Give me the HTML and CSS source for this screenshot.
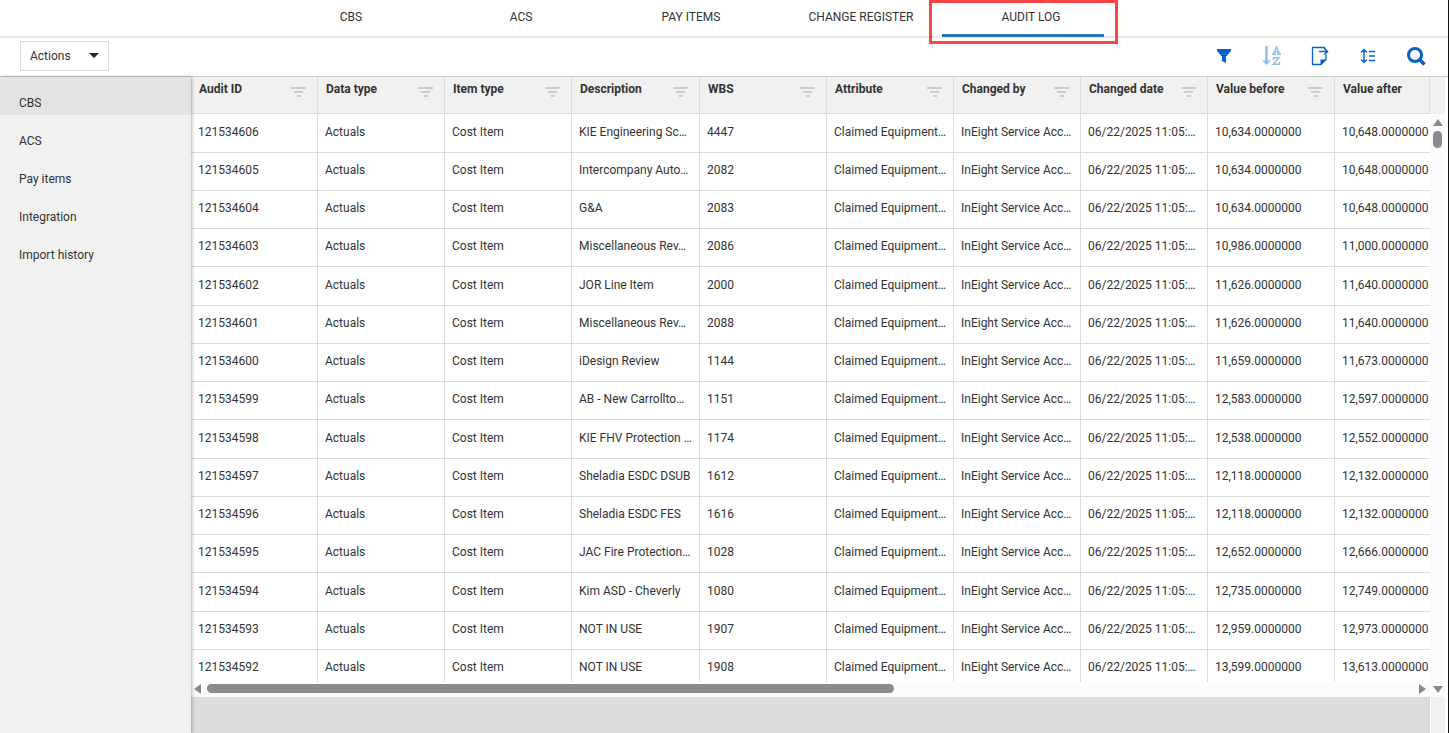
FILE: index.html
```html
<!DOCTYPE html>
<html lang="en">
<head>
    <meta charset="UTF-8">
    <meta name="viewport" content="width=device-width, initial-scale=1.0">
    <title>Audit log</title>
    <link rel="stylesheet" href="styles.css">
</head>
<body>
    <nav class="tabs">
        <a class="tab" href="#cbs">CBS</a>
        <a class="tab" href="#acs">ACS</a>
        <a class="tab" href="#pay-items">PAY ITEMS</a>
        <a class="tab" href="#change-register">CHANGE REGISTER</a>
        <a class="tab active" href="#audit-log">AUDIT LOG</a>
    </nav>

    <div class="toolbar">
        <button class="actions" type="button">Actions <span class="caret"></span></button>
        <div class="tools">
            <button type="button" aria-label="Filter">
                <svg width="20" height="20" viewBox="0 0 20 20"><path d="M3 3h14v2l-5 5.500V17l-4-2v-4.500L3 5z" fill="#0563cb"/></svg>
            </button>
            <button type="button" aria-label="Sort" disabled>
                <svg width="20" height="20" viewBox="0 0 20 20" fill="none" stroke="#8fbfec">
                    <path d="M4.500 0v16" stroke-width="2.500"/>
                    <path d="M0 14.500h9L4.500 19z" fill="#8fbfec" stroke="none"/>
                    <path d="M10 8.200h4M15 8.200h4M11.500 8l3-7 3 7M12.500 6h4" stroke-width="1.500"/>
                    <path d="M11.500 14v-2.200H17l-5.500 6.400h6V16" stroke-width="1.500"/>
                </svg>
            </button>
            <button type="button" aria-label="Export">
                <svg width="20" height="20" viewBox="0 0 20 20" fill="none" stroke="#0563cb">
                    <path d="M14.500 3V1.500h-12v17h8.500l5-5V8.500" stroke-width="1.300"/>
                    <path d="M9 5.500h8M14.500 2.500l3 3-3 3" stroke-width="1.500"/>
                    <path d="M10.500 19v-5.500h6.500z" fill="#0563cb" stroke="none"/>
                </svg>
            </button>
            <button type="button" aria-label="Row height">
                <svg width="20" height="20" viewBox="0 0 20 20" fill="none" stroke="#0563cb" stroke-width="1.500">
                    <path d="M6 4v12M3 6.500l3-3 3 3M3 13.500l3 3 3-3"/>
                    <path d="M11 5.500h6M11 10h6M11 14.500h6"/>
                </svg>
            </button>
            <button type="button" aria-label="Search">
                <svg width="20" height="20" viewBox="0 0 20 20" fill="none" stroke="#0563cb">
                    <circle cx="9" cy="9" r="6.500" stroke-width="3"/>
                    <path d="M13.500 13.500l5 5" stroke-width="3.500"/>
                </svg>
            </button>
        </div>
    </div>

    <div class="content">
        <aside class="sidebar">
            <a class="selected" href="#log-cbs">CBS</a>
            <a href="#log-acs">ACS</a>
            <a href="#log-pay">Pay items</a>
            <a href="#log-integration">Integration</a>
            <a href="#log-import">Import history</a>
        </aside>

        <main class="grid">
            <div class="grid-view">
                <table>
                    <colgroup>
                        <col><col><col><col class="wide"><col><col><col><col><col><col class="last">
                    </colgroup>
                    <thead>
                        <tr id="head"></tr>
                    </thead>
                    <tbody id="rows"></tbody>
                </table>
            </div>
            <div class="v-scroll">
                <div class="v-head"></div>
                <span class="arrow up"></span>
                <span class="v-thumb"></span>
            </div>
            <div class="h-scroll">
                <span class="arrow left"></span>
                <div class="h-track"><div class="h-thumb"></div></div>
                <span class="arrow right"></span>
            </div>
            <div class="corner"><span class="arrow down"></span></div>
            <div class="grid-footer"></div>
            <div class="footer-end"></div>
        </main>
    </div>

    <script>
        const columns = ['Audit ID', 'Data type', 'Item type', 'Description', 'WBS', 'Attribute',
            'Changed by', 'Changed date', 'Value before', 'Value after'];

        // id, description, wbs, before, after
        const log = [
            ['121534606', 'KIE Engineering Sc…', '4447', '10,634.0000000', '10,648.0000000'],
            ['121534605', 'Intercompany Auto…', '2082', '10,634.0000000', '10,648.0000000'],
            ['121534604', 'G&A', '2083', '10,634.0000000', '10,648.0000000'],
            ['121534603', 'Miscellaneous Rev…', '2086', '10,986.0000000', '11,000.0000000'],
            ['121534602', 'JOR Line Item', '2000', '11,626.0000000', '11,640.0000000'],
            ['121534601', 'Miscellaneous Rev…', '2088', '11,626.0000000', '11,640.0000000'],
            ['121534600', 'iDesign Review', '1144', '11,659.0000000', '11,673.0000000'],
            ['121534599', 'AB - New Carrollto…', '1151', '12,583.0000000', '12,597.0000000'],
            ['121534598', 'KIE FHV Protection …', '1174', '12,538.0000000', '12,552.0000000'],
            ['121534597', 'Sheladia ESDC DSUB', '1612', '12,118.0000000', '12,132.0000000'],
            ['121534596', 'Sheladia ESDC FES', '1616', '12,118.0000000', '12,132.0000000'],
            ['121534595', 'JAC Fire Protection…', '1028', '12,652.0000000', '12,666.0000000'],
            ['121534594', 'Kim ASD - Cheverly', '1080', '12,735.0000000', '12,749.0000000'],
            ['121534593', 'NOT IN USE', '1907', '12,959.0000000', '12,973.0000000'],
            ['121534592', 'NOT IN USE', '1908', '13,599.0000000', '13,613.0000000']
        ];

        const filterIcon = '<svg width="18" height="12" viewBox="0 0 18 12"><path d="M1 2h15M4 6h9M7 10h4" stroke="#cdcdcd" stroke-width="2"/></svg>';

        const head = document.getElementById('head');
        columns.forEach((name, i) => {
            const th = document.createElement('th');
            const icon = i < columns.length - 1 ? filterIcon : '';
            th.innerHTML = `<div class="th-inner"><span>${name}</span>${icon}</div>`;
            head.appendChild(th);
        });

        const rows = document.getElementById('rows');
        log.forEach(([id, description, wbs, before, after]) => {
            const tr = rows.insertRow();
            const cells = [id, 'Actuals', 'Cost Item', description, wbs, 'Claimed Equipment…',
                'InEight Service Acc…', '06/22/2025 11:05:…', before, after];
            cells.forEach(text => {
                tr.insertCell().textContent = text;
            });
        });
    </script>
</body>
</html>
```

FILE: styles.css
```css
* {
    box-sizing: border-box;
}
body {
    margin: 0;
    height: 100vh;
    display: flex;
    flex-direction: column;
    overflow: hidden;
    border-right: 1px solid #111;
    background: #fff;
    color: #333;
    font-family: Roboto, "Liberation Sans", sans-serif;
    font-size: 12px;
    line-height: 14px;
}
a {
    color: inherit;
    text-decoration: none;
}
button {
    font: inherit;
    color: inherit;
    background: none;
    border: 0;
    padding: 0;
}

.tabs {
    display: flex;
    justify-content: center;
    height: 38px;
    padding-right: 66px;
    border-bottom: 2px solid #e9e9e9;
}
.tab {
    position: relative;
    width: 170px;
    padding-top: 10px;
    text-align: center;
}
.tab.active::before {
    content: "";
    position: absolute;
    left: -4px;
    right: 12px;
    top: 34px;
    height: 3px;
    background: linear-gradient(#65a3df, #0759b8 40%, #3d84d0);
}
.tab.active::after {
    content: "";
    position: absolute;
    z-index: 2;
    left: -17px;
    right: -2px;
    top: 0;
    height: 38px;
    border: 3px solid #fb4444;
}

.toolbar {
    display: flex;
    align-items: center;
    justify-content: space-between;
    height: 39px;
    padding: 0 22px 3px 20px;
    border-bottom: 1px solid #cacaca;
}
.actions {
    display: flex;
    align-items: center;
    justify-content: space-between;
    width: 89px;
    height: 30px;
    padding: 0 9px;
    border: 1px solid #dcdcdc;
}
.caret {
    border: 5px solid transparent;
    border-top-color: #222;
    border-bottom: 0;
}
.tools {
    display: flex;
    gap: 28px;
}
.tools svg {
    display: block;
}

.content {
    flex: 1;
    display: flex;
    min-height: 0;
}
.sidebar {
    width: 191px;
    flex-shrink: 0;
    z-index: 1;
    background: #f1f1f1;
    box-shadow: 1px 0 3px rgba(0, 0, 0, 0.3);
}
.sidebar a {
    display: block;
    padding: 19px 19px 5px;
}
.sidebar .selected {
    background: #e3e3e3;
}

.grid {
    flex: 1;
    min-width: 0;
    display: grid;
    grid-template-columns: 1fr 15px;
    grid-template-rows: 1fr 15px 36px;
    padding-right: 3px;
}
.grid-view {
    overflow: hidden;
    min-height: 0;
}
table {
    width: 100%;
    table-layout: fixed;
    border-collapse: separate;
    border-spacing: 0;
}
col {
    width: 127px;
}
col.wide {
    width: 128px;
}
col.last {
    width: auto;
}
th, td {
    border-right: 1px solid #dcdcdc;
    border-bottom: 1px solid #dcdcdc;
    text-align: left;
    white-space: nowrap;
}
th {
    height: 37px;
    padding: 5px 9px 0 8px;
    vertical-align: top;
    background: #f1f1f1;
    font-weight: 700;
}
.th-inner {
    display: flex;
    justify-content: space-between;
}
.th-inner svg {
    margin-top: 4px;
}
td {
    height: 38px;
    padding: 0 0 3px 7px;
}
td:last-child {
    border-right: 0;
}
/* every fourth row takes the spare pixel */
tbody tr:nth-child(4n+1) td {
    height: 39px;
}

.v-scroll, .h-scroll, .corner {
    background: #fbfbfb;
}
.v-scroll {
    display: flex;
    flex-direction: column;
    align-items: center;
}
.v-head {
    width: 100%;
    height: 37px;
    margin-bottom: 5px;
    background: #f1f1f1;
}
.v-thumb {
    width: 9px;
    height: 17px;
    margin-top: 5px;
    border-radius: 5px;
    background: #8a8a8a;
}
.h-scroll {
    display: flex;
    align-items: center;
    padding: 0 4px 2px 3px;
}
.h-track {
    flex: 1;
    margin: 0 6px;
}
.h-thumb {
    width: 57%;
    height: 9px;
    border-radius: 5px;
    background: #8a8a8a;
}
.corner {
    display: flex;
    align-items: center;
    justify-content: center;
}
.arrow {
    border: 0 solid transparent;
}
.arrow.up {
    border-width: 0 5px 7px;
    border-bottom-color: #8a8a8a;
}
.arrow.down {
    border-width: 7px 5px 0;
    border-top-color: #8a8a8a;
}
.arrow.left {
    border-width: 5px 7px 5px 0;
    border-right-color: #8a8a8a;
}
.arrow.right {
    border-width: 5px 0 5px 7px;
    border-left-color: #8a8a8a;
}
.grid-footer {
    background: #dcdcdc;
}
.footer-end {
    border-left: 1px solid #fff;
    background: #f1f1f1;
}
```
